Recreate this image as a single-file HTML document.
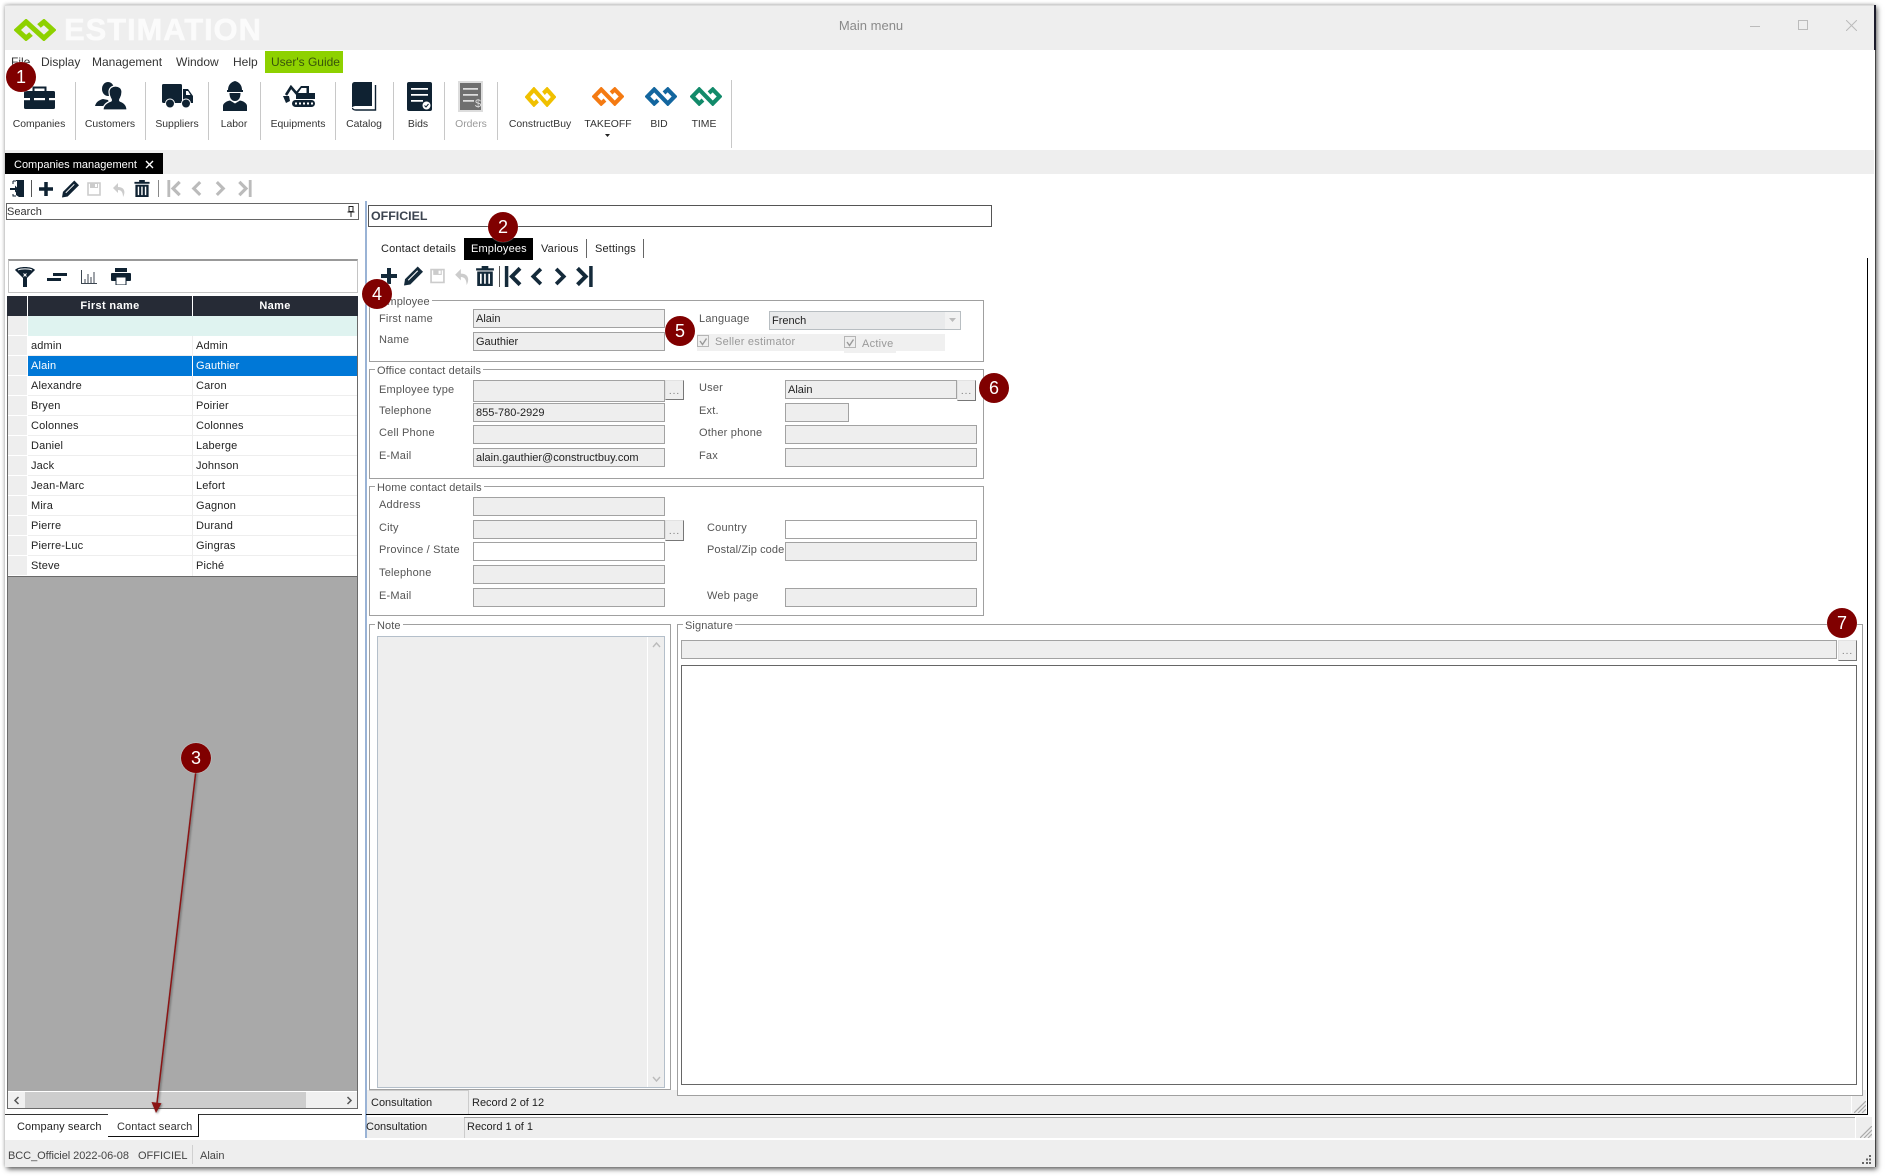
<!DOCTYPE html>
<html lang="en"><head><meta charset="utf-8"><title>Main menu</title>
<style>
html,body{margin:0;padding:0;background:#fff}
body{position:relative;width:1885px;height:1176px;overflow:hidden;font:11px/14px "Liberation Sans",sans-serif;color:#222}
div,span,svg{position:absolute;box-sizing:border-box}
span{white-space:nowrap;margin-top:1px}
.l{color:#555;letter-spacing:.2px}
.i{border:1px solid #a2a2a2;background:#eee;padding-left:2px;line-height:19px;color:#222;height:19px;white-space:nowrap}
.w{background:#fff}
.b{width:19px;height:21px;background:#eee;border:1px solid #e2e2e2;border-right:1px solid #777;border-bottom:1px solid #777;color:#777;text-align:center;line-height:21px;letter-spacing:1px;font-size:10px}
.gb{border:1px solid #a0a0a0;background:#fff}
.lg{background:#fff;padding:0 2px;color:#555;letter-spacing:.1px;height:14px}
.s{width:1px;background:#c8c8c8;top:82px;height:58px}
.tb{font-size:10.4px;color:#333;text-align:center;width:90px;top:117px}
.c{width:30px;height:30px;border-radius:50%;background:#800000;color:#fff;font-size:18px;line-height:30px;text-align:center;z-index:9;box-shadow:0 0 1px #fff}
.r{left:31px;letter-spacing:.15px;color:#222}
.n{left:196px;letter-spacing:.15px;color:#222}
.hl{left:28px;width:329px;height:1px;background:#eee}
.rh{left:8px;width:19px;height:19px;background:#eee}
</style></head><body>
<svg width="0" height="0" style="position:absolute">
<defs>
<symbol id="logo" viewBox="-1.2 -1.2 42.4 24.4" preserveAspectRatio="none"><path d="M16 15.5L11 20 2 11l9-9 18 18 9-9-9-9-5 4.5" fill="none" stroke="currentColor" stroke-width="5.4"/></symbol>
<symbol id="plus" viewBox="0 0 16 16"><path fill="currentColor" d="M6 0h4v6h6v4h-6v6H6v-6H0V6h6z"/></symbol>
<symbol id="pencil" viewBox="0 0 18 18"><path fill="currentColor" d="M13 0l5 5L6 17l-6 1 1-6z"/><path stroke="#fff" stroke-width="1" d="M4 13L13 4"/></symbol>
<symbol id="save" viewBox="0 0 14 14"><path fill="none" stroke="currentColor" stroke-width="1.6" d="M1 1h12v12H1z"/><path fill="currentColor" d="M3 1h8v5H3z"/><path fill="#fff" d="M8 2h2v3H8z"/></symbol>
<symbol id="undo" viewBox="0 0 12 14"><path fill="currentColor" d="M5 0L0 5l5 5V7c3 0 5 2 5 7 2-3 3-10-5-10z"/></symbol>
<symbol id="trash" viewBox="0 0 16 18"><path fill="currentColor" d="M5 0h6v2h5v2H0V2h5zM1 5h14v13H1z"/><path fill="#fff" d="M3.500 7h1.500v9H3.500zM7.200 7h1.500v9H7.200zM11 7h1.500v9H11z"/></symbol>
<symbol id="first" viewBox="0 0 14 18"><path fill="currentColor" d="M0 0h3v18H0z"/><path fill="none" stroke="currentColor" stroke-width="3.400" d="M13 2L6 9l7 7"/></symbol>
<symbol id="prev" viewBox="0 0 12 18"><path fill="none" stroke="currentColor" stroke-width="3.400" d="M10 2L3 9l7 7"/></symbol>
<symbol id="next" viewBox="0 0 12 18"><path fill="none" stroke="currentColor" stroke-width="3.400" d="M2 2l7 7-7 7"/></symbol>
<symbol id="last" viewBox="0 0 14 18"><path fill="currentColor" d="M11 0h3v18h-3z"/><path fill="none" stroke="currentColor" stroke-width="3.400" d="M1 2l7 7-7 7"/></symbol>
<symbol id="grip" viewBox="0 0 12 12"><path stroke="#aaa" stroke-width="1.200" d="M12 0L0 12M12 4L4 12M12 8L8 12"/></symbol>
</defs></svg>

<!-- window -->
<div style="left:5px;top:5px;width:1870px;height:1162px;background:#fff;box-shadow:2px 2px 5px #555,-1px -1px 3px #ddd"></div>
<div style="left:1874px;top:5px;width:2px;height:45px;background:#1c1c2c"></div>
<div style="left:1875px;top:50px;width:1px;height:1117px;background:#444"></div>
<div style="left:5px;top:5px;width:1869px;height:45px;background:#eee;border-top:1px solid #ddd"></div>

<svg style="left:14px;top:19px;color:#8ed100" width="42" height="22"><use href="#logo"/></svg>
<span style="left:64px;top:14px;font:bold 31px/30px 'Liberation Sans',sans-serif;color:#fbfbfb;letter-spacing:.9px;-webkit-text-stroke:.5px #fbfbfb">ESTIMATION</span>
<span style="left:771px;top:18px;width:200px;text-align:center;font-size:13px;color:#8a8a8a">Main menu</span>
<div style="left:1750px;top:26px;width:10px;height:1px;background:#bbb"></div>
<div style="left:1798px;top:20px;width:10px;height:10px;border:1px solid #bbb"></div>
<svg style="left:1846px;top:20px" width="11" height="11"><path d="M0 0l11 11M11 0L0 11" stroke="#bbb"/></svg>

<!-- menu -->
<div style="left:265px;top:51px;width:78px;height:22px;background:#8ed100"></div>
<span style="left:11px;top:54px;font-size:12px;color:#333">File</span>
<span style="left:41px;top:54px;font-size:12px;color:#333">Display</span>
<span style="left:92px;top:54px;font-size:12px;color:#333">Management</span>
<span style="left:176px;top:54px;font-size:12px;color:#333">Window</span>
<span style="left:233px;top:54px;font-size:12px;color:#333">Help</span>
<span style="left:271px;top:54px;font-size:12px;color:#38540a">User's Guide</span>

<!-- main toolbar -->
<div class="s" style="left:75px"></div><div class="s" style="left:145px"></div><div class="s" style="left:208px"></div><div class="s" style="left:260px"></div><div class="s" style="left:335px"></div><div class="s" style="left:393px"></div><div class="s" style="left:444px"></div><div class="s" style="left:497px"></div><div class="s" style="left:731px;top:80px;height:68px"></div>

<svg style="left:24px;top:86px;color:#0f2232" width="31" height="23" viewBox="0 0 31 23"><path d="M9.500 5V1.500h12V5" fill="none" stroke="currentColor" stroke-width="2"/><rect y="5" width="31" height="18" rx="1.500" fill="currentColor"/><rect y="12" width="31" height="2.200" fill="#fff"/><rect x="6" y="10" width="4" height="6" fill="currentColor"/><rect x="21" y="10" width="4" height="6" fill="currentColor"/></svg>
<svg style="left:95px;top:82px;color:#0f2232" width="32" height="28" viewBox="0 0 32 28"><ellipse cx="13" cy="7" rx="6" ry="7" fill="currentColor"/><path d="M0 24c1-4 4-6 8-7l5 1 3 6z" fill="currentColor"/><path d="M8 28c0-6 5-8 8-9 1-1 0-2-.5-3-1-2-1.500-4-1.500-6 0-4 3-6 6.500-6S27 6 27 10c0 2-.5 4-1.500 6-.5 1-1.500 2-.5 3 3 1 7 3 7 9z" fill="currentColor" stroke="#fff" stroke-width="1.200"/></svg>
<svg style="left:162px;top:84px;color:#0f2232" width="31" height="24" viewBox="0 0 31 24"><rect width="20" height="19" rx="1.500" fill="currentColor"/><path d="M21 5h5l5 7v7H21z" fill="currentColor"/><path d="M24 7h2l2.500 4H24z" fill="#fff"/><circle cx="8" cy="19.500" r="4.500" fill="currentColor" stroke="#fff"/><circle cx="24" cy="19.500" r="4.500" fill="currentColor" stroke="#fff"/></svg>
<svg style="left:223px;top:81px;color:#0f2232" width="24" height="30" viewBox="0 0 24 30"><path d="M5 9c0-5 3-8 7-9 4 1 7 4 7 9z" fill="currentColor"/><rect x="4" y="9" width="16" height="2" fill="currentColor"/><path d="M6.500 12h11c0 5-2 8-5.500 8s-5.500-3-5.500-8z" fill="currentColor"/><path d="M0 30v-5c0-3 4-5 7-5.500l5 3 5-3c3 .5 7 2.500 7 5.500v5z" fill="currentColor"/></svg>
<svg style="left:283px;top:85px;color:#0f2232" width="32" height="22" viewBox="0 0 32 22"><rect x="9" y="15" width="23" height="7" rx="3.500" fill="currentColor"/><path fill="#fff" d="M12 17.500h2v2h-2zM16 17.500h2v2h-2zM20 17.500h2v2h-2zM24 17.500h2v2h-2zM28 17.500h2v2h-2z"/><path d="M13 14V7l5-6h8v7h6v6z" fill="currentColor"/><path d="M18.500 3h5v5H15z" fill="#fff"/><path d="M14 9L8 2 3 10" fill="none" stroke="currentColor" stroke-width="2.600"/><path d="M0 11h6l1 5-4 2z" fill="currentColor"/></svg>
<svg style="left:352px;top:82px;color:#0f2232" width="25" height="29" viewBox="0 0 25 29"><path d="M0 3c0-2 1-3 3-3h17v24H4c-2 0-4 .8-4 2z" fill="currentColor"/><path d="M23.500 3v25H4c-2 0-3.500-.8-3.500-2" fill="none" stroke="currentColor" stroke-width="1.400"/></svg>
<svg style="left:407px;top:82px;color:#0f2232" width="25" height="29" viewBox="0 0 25 29"><rect width="25" height="29" rx="2" fill="currentColor"/><path fill="#fff" d="M4 6h17v1.800H4zM4 12h17v1.800H4zM4 18h12v1.800H4z"/><circle cx="19.500" cy="23.500" r="4" fill="#fff"/><path d="M17.500 23.500l1.500 1.500 2.500-3" fill="none" stroke="#0f2232" stroke-width="1"/></svg>
<div style="left:458px;top:81px;width:25px;height:31px;background:#6f6f6f;border:2px solid #ddd"></div>
<svg style="left:458px;top:81px" width="25" height="31" viewBox="0 0 25 31"><path fill="#ddd" d="M5 7h15v1.800H5zM5 13h15v1.800H5zM5 19h11v1.800H5z"/></svg>
<span style="left:475px;top:96px;font-size:11px;color:#ddd">$</span>

<svg style="left:525px;top:87px;color:#f0c000" width="31" height="20"><use href="#logo"/></svg>
<svg style="left:592px;top:87px;color:#f47a12" width="32" height="19"><use href="#logo"/></svg>
<svg style="left:645px;top:87px;color:#13669f" width="32" height="19"><use href="#logo"/></svg>
<svg style="left:690px;top:87px;color:#128a6a" width="32" height="19"><use href="#logo"/></svg>
<svg style="left:605px;top:134px" width="5" height="3"><path d="M0 0h5L2.500 3z" fill="#222"/></svg>

<span class="tb" style="left:-6px">Companies</span>
<span class="tb" style="left:65px">Customers</span>
<span class="tb" style="left:132px">Suppliers</span>
<span class="tb" style="left:189px">Labor</span>
<span class="tb" style="left:253px">Equipments</span>
<span class="tb" style="left:319px">Catalog</span>
<span class="tb" style="left:373px">Bids</span>
<span class="tb" style="left:426px;color:#9a9a9a">Orders</span>
<span class="tb" style="left:495px">ConstructBuy</span>
<span class="tb" style="left:563px">TAKEOFF</span>
<span class="tb" style="left:614px">BID</span>
<span class="tb" style="left:659px">TIME</span>

<!-- doc tab band -->
<div style="left:5px;top:150px;width:1869px;height:24px;background:#eee"></div>
<div style="left:5px;top:153px;width:158px;height:21px;background:#000"></div>
<span style="left:14px;top:157px;color:#fff;font-size:11px">Companies management</span>
<svg style="left:145px;top:160px" width="9" height="9"><path d="M1 1l7 7M8 1L1 8" stroke="#fff" stroke-width="1.400"/></svg>

<!-- toolbar 2 -->
<svg style="left:10px;top:180px;color:#0f2232" width="14" height="17" viewBox="0 0 14 17"><path d="M6 0h8v17H9l-3-2v-4h1V1H6z" fill="currentColor"/><path d="M0 8h5V5.500L8.500 9 5 12.500V10H0z" fill="currentColor"/><path d="M3 1h3M3 1v3M3 14v2h3" stroke="currentColor" fill="none"/></svg>
<div style="left:31px;top:180px;width:1px;height:17px;background:#555"></div>
<svg style="left:39px;top:182px;color:#0f2232" width="14" height="14"><use href="#plus"/></svg>
<svg style="left:62px;top:180px;color:#0f2232" width="17" height="18"><use href="#pencil"/></svg>
<svg style="left:87px;top:182px;color:#ccc" width="14" height="14"><use href="#save"/></svg>
<svg style="left:113px;top:183px;color:#ccc" width="12" height="14"><use href="#undo"/></svg>
<svg style="left:134px;top:180px;color:#0f2232" width="16" height="17"><use href="#trash"/></svg>
<div style="left:158px;top:180px;width:1px;height:17px;background:#888"></div>
<svg style="left:167px;top:180px;color:#bbb" width="14" height="17"><use href="#first"/></svg>
<svg style="left:191px;top:180px;color:#bbb" width="11" height="17"><use href="#prev"/></svg>
<svg style="left:215px;top:180px;color:#bbb" width="11" height="17"><use href="#next"/></svg>
<svg style="left:238px;top:180px;color:#bbb" width="14" height="17"><use href="#last"/></svg>

<!-- search -->
<div style="left:6px;top:203px;width:353px;height:17px;border:1px solid #666"></div>
<span style="left:7px;top:204px;color:#333">Search</span>
<svg style="left:347px;top:206px" width="8" height="11" viewBox="0 0 8 11"><path d="M2 .5h4v5H2zM.5 6h7M4 6v5" fill="none" stroke="#222"/></svg>

<div style="left:365px;top:201px;width:2px;height:937px;background:#9ab3d5"></div>

<!-- grid toolbar -->
<div style="left:8px;top:259px;width:350px;height:34px;border:1px solid #c4c4c4;border-top:2px solid #999;background:#fff"></div>
<svg style="left:15px;top:267px;color:#0f2232" width="20" height="20" viewBox="0 0 20 20"><path d="M0 3c3-4 17-4 20 0l-8 8v9H8v-9z" fill="currentColor"/><path d="M3 3c3-1.500 11-1.500 14 0" stroke="#fff" fill="none"/><path d="M8.500 6.500l3 3M11.500 6.500l-3 3" stroke="#fff"/></svg>
<svg style="left:47px;top:273px;color:#0f2232" width="20" height="8"><path d="M6 0h14v3H6zM0 5h14v3H0z" fill="currentColor"/></svg>
<svg style="left:81px;top:270px" width="16" height="14"><path d="M.5 0v13.500H16M4 13V9M7 13V4M10 13V7M13 13V2" stroke="#3c4650" fill="none"/></svg>
<svg style="left:111px;top:268px;color:#0f2232" width="20" height="17" viewBox="0 0 20 17"><rect x="4" width="12" height="4" fill="currentColor"/><rect y="5" width="20" height="8" rx="1" fill="currentColor"/><rect x="5" y="9" width="10" height="8" fill="#fff" stroke="#0f2232"/></svg>

<!-- grid -->
<div style="left:7px;top:296px;width:351px;height:813px;border:1px solid #6a6a6a;border-top:0;background:#a9a9a9"></div>
<div style="left:7px;top:296px;width:351px;height:20px;background:#262b36"></div>
<div style="left:27px;top:296px;width:1px;height:20px;background:#fff"></div>
<div style="left:192px;top:296px;width:1px;height:20px;background:#fff"></div>
<span style="left:28px;top:298px;width:164px;text-align:center;color:#fff;font-weight:bold;font-size:11px;letter-spacing:.35px">First name</span>
<span style="left:193px;top:298px;width:164px;text-align:center;color:#fff;font-weight:bold;font-size:11px;letter-spacing:.35px">Name</span>
<div style="left:8px;top:316px;width:349px;height:260px;background:#fff"></div>
<div style="left:28px;top:316px;width:329px;height:20px;background:#dff3f0"></div>
<div style="left:192px;top:336px;width:1px;height:240px;background:#eee"></div>
<div style="left:28px;top:356px;width:329px;height:20px;background:#0078d7"></div>
<div style="left:192px;top:356px;width:1px;height:20px;background:#fff"></div>
<div style="left:8px;top:576px;width:349px;height:1px;background:#6a6a6a"></div>
<div class="rh" style="top:316px"></div><div class="rh" style="top:336px"></div><div class="rh" style="top:356px"></div><div class="rh" style="top:376px"></div><div class="rh" style="top:396px"></div><div class="rh" style="top:416px"></div><div class="rh" style="top:436px"></div><div class="rh" style="top:456px"></div><div class="rh" style="top:476px"></div><div class="rh" style="top:496px"></div><div class="rh" style="top:516px"></div><div class="rh" style="top:536px"></div><div class="rh" style="top:556px"></div>
<div class="hl" style="top:355px"></div><div class="hl" style="top:395px"></div><div class="hl" style="top:415px"></div><div class="hl" style="top:435px"></div><div class="hl" style="top:455px"></div><div class="hl" style="top:475px"></div><div class="hl" style="top:495px"></div><div class="hl" style="top:515px"></div><div class="hl" style="top:535px"></div><div class="hl" style="top:555px"></div>
<span class="r" style="top:338px">admin</span><span class="n" style="top:338px">Admin</span>
<span class="r" style="top:358px;color:#fff">Alain</span><span class="n" style="top:358px;color:#fff">Gauthier</span>
<span class="r" style="top:378px">Alexandre</span><span class="n" style="top:378px">Caron</span>
<span class="r" style="top:398px">Bryen</span><span class="n" style="top:398px">Poirier</span>
<span class="r" style="top:418px">Colonnes</span><span class="n" style="top:418px">Colonnes</span>
<span class="r" style="top:438px">Daniel</span><span class="n" style="top:438px">Laberge</span>
<span class="r" style="top:458px">Jack</span><span class="n" style="top:458px">Johnson</span>
<span class="r" style="top:478px">Jean-Marc</span><span class="n" style="top:478px">Lefort</span>
<span class="r" style="top:498px">Mira</span><span class="n" style="top:498px">Gagnon</span>
<span class="r" style="top:518px">Pierre</span><span class="n" style="top:518px">Durand</span>
<span class="r" style="top:538px">Pierre-Luc</span><span class="n" style="top:538px">Gingras</span>
<span class="r" style="top:558px">Steve</span><span class="n" style="top:558px">Piché</span>
<!-- hscroll -->
<div style="left:8px;top:1091px;width:349px;height:17px;background:#f0f0f0;border-top:1px solid #fff"></div>
<div style="left:25px;top:1092px;width:281px;height:16px;background:#cdcdcd"></div>
<svg style="left:13px;top:1096px" width="7" height="9"><path d="M5.500 1L2 4.500 5.500 8" fill="none" stroke="#555" stroke-width="1.500"/></svg>
<svg style="left:346px;top:1096px" width="7" height="9"><path d="M1.500 1L5 4.500 1.500 8" fill="none" stroke="#555" stroke-width="1.500"/></svg>
<!-- bottom tabs -->
<div style="left:5px;top:1114px;width:103px;height:1px;background:#333"></div>
<div style="left:198px;top:1114px;width:164px;height:1px;background:#333"></div>
<div style="left:108px;top:1136px;width:90px;height:1px;background:#111"></div>
<div style="left:198px;top:1114px;width:1px;height:23px;background:#111"></div>
<span style="left:17px;top:1119px;color:#222;letter-spacing:.1px">Company search</span>
<span style="left:117px;top:1119px;color:#333;letter-spacing:.1px">Contact search</span>

<!-- right header -->
<div style="left:368px;top:205px;width:624px;height:22px;border:1px solid #555"></div>
<span style="left:371px;top:208px;font-weight:bold;font-size:12.400px;color:#3c4450">OFFICIEL</span>
<div style="left:464px;top:238px;width:69px;height:22px;background:#000"></div>
<span style="left:381px;top:241px;color:#222;letter-spacing:.15px">Contact details</span>
<span style="left:471px;top:241px;color:#fff;letter-spacing:.15px">Employees</span>
<span style="left:541px;top:241px;color:#222;letter-spacing:.15px">Various</span>
<span style="left:595px;top:241px;color:#222;letter-spacing:.15px">Settings</span>
<div style="left:586px;top:239px;width:1px;height:19px;background:#666"></div>
<div style="left:643px;top:239px;width:1px;height:19px;background:#666"></div>

<svg style="left:381px;top:268px;color:#142a3a" width="16" height="16"><use href="#plus"/></svg>
<svg style="left:404px;top:266px;color:#142a3a" width="19" height="20"><use href="#pencil"/></svg>
<svg style="left:430px;top:268px;color:#ccc" width="15" height="16"><use href="#save"/></svg>
<svg style="left:455px;top:269px;color:#ccc" width="14" height="16"><use href="#undo"/></svg>
<svg style="left:476px;top:266px;color:#142a3a" width="18" height="20"><use href="#trash"/></svg>
<div style="left:499px;top:266px;width:1px;height:21px;background:#555"></div>
<svg style="left:504px;top:266px;color:#142a3a" width="18" height="21"><use href="#first"/></svg>
<svg style="left:530px;top:266px;color:#142a3a" width="13" height="21"><use href="#prev"/></svg>
<svg style="left:554px;top:266px;color:#142a3a" width="13" height="21"><use href="#next"/></svg>
<svg style="left:575px;top:266px;color:#142a3a" width="19" height="21"><use href="#last"/></svg>

<div style="left:1867px;top:258px;width:1px;height:857px;background:#000"></div>

<!-- Employee -->
<div class="gb" style="left:369px;top:300px;width:615px;height:62px"></div>
<span class="lg" style="left:378px;top:294px">Employee</span>
<span class="l" style="left:379px;top:311px">First name</span>
<span class="l" style="left:379px;top:332px">Name</span>
<div class="i" style="left:473px;top:309px;width:192px">Alain</div>
<div class="i" style="left:473px;top:332px;width:192px">Gauthier</div>
<span class="l" style="left:699px;top:311px">Language</span>
<div class="i" style="left:769px;top:311px;width:192px;background:#e9eaeb;border-color:#b8bec2">French</div>
<div style="left:945px;top:312px;width:15px;height:17px;background:#f2f2f2"></div>
<svg style="left:949px;top:318px" width="7" height="4"><path d="M0 0h7L3.500 4z" fill="#bbb"/></svg>
<div style="left:697px;top:334px;width:248px;height:17px;background:#f0f0f0"></div>
<div style="left:844px;top:351px;width:52px;height:2px;background:#f0f0f0"></div>
<div style="left:697px;top:335px;width:12px;height:12px;border:1px solid #b5b5b5;background:#eee"></div>
<svg style="left:698px;top:336px" width="11" height="11"><path d="M2 5l2.500 3.500 4-6" stroke="#999" stroke-width="1.400" fill="none"/></svg>
<span style="left:715px;top:334px;color:#999;letter-spacing:.25px">Seller estimator</span>
<div style="left:844px;top:336px;width:12px;height:12px;border:1px solid #b5b5b5;background:#eee"></div>
<svg style="left:845px;top:337px" width="11" height="11"><path d="M2 5l2.500 3.500 4-6" stroke="#999" stroke-width="1.400" fill="none"/></svg>
<span style="left:862px;top:336px;color:#999;letter-spacing:.25px">Active</span>

<!-- Office -->
<div class="gb" style="left:369px;top:369px;width:615px;height:110px"></div>
<span class="lg" style="left:375px;top:363px">Office contact details</span>
<span class="l" style="left:379px;top:382px">Employee type</span>
<span class="l" style="left:379px;top:403px">Telephone</span>
<span class="l" style="left:379px;top:425px">Cell Phone</span>
<span class="l" style="left:379px;top:448px">E-Mail</span>
<div class="i" style="left:473px;top:380px;width:192px;height:22px"></div>
<div class="b" style="left:665px;top:380px;height:20px;line-height:22px">...</div>
<div class="i" style="left:473px;top:403px;width:192px">855-780-2929</div>
<div class="i" style="left:473px;top:425px;width:192px"></div>
<div class="i" style="left:473px;top:448px;width:192px">alain.gauthier@constructbuy.com</div>
<span class="l" style="left:699px;top:380px">User</span>
<span class="l" style="left:699px;top:403px">Ext.</span>
<span class="l" style="left:699px;top:425px">Other phone</span>
<span class="l" style="left:699px;top:448px">Fax</span>
<div class="i" style="left:785px;top:380px;width:172px">Alain</div>
<div class="b" style="left:957px;top:380px">...</div>
<div class="i" style="left:785px;top:403px;width:64px"></div>
<div class="i" style="left:785px;top:425px;width:192px"></div>
<div class="i" style="left:785px;top:448px;width:192px"></div>

<!-- Home -->
<div class="gb" style="left:369px;top:486px;width:615px;height:130px"></div>
<span class="lg" style="left:375px;top:480px">Home contact details</span>
<span class="l" style="left:379px;top:497px">Address</span>
<span class="l" style="left:379px;top:520px">City</span>
<span class="l" style="left:379px;top:542px">Province / State</span>
<span class="l" style="left:379px;top:565px">Telephone</span>
<span class="l" style="left:379px;top:588px">E-Mail</span>
<div class="i" style="left:473px;top:497px;width:192px"></div>
<div class="i" style="left:473px;top:520px;width:192px"></div>
<div class="b" style="left:665px;top:520px">...</div>
<div class="i w" style="left:473px;top:542px;width:192px"></div>
<div class="i" style="left:473px;top:565px;width:192px"></div>
<div class="i" style="left:473px;top:588px;width:192px"></div>
<span class="l" style="left:707px;top:520px">Country</span>
<span class="l" style="left:707px;top:542px;letter-spacing:.1px">Postal/Zip code</span>
<span class="l" style="left:707px;top:588px">Web page</span>
<div class="i w" style="left:785px;top:520px;width:192px"></div>
<div class="i" style="left:785px;top:542px;width:192px"></div>
<div class="i" style="left:785px;top:588px;width:192px"></div>

<!-- Status 1 -->
<div style="left:367px;top:1090px;width:1499px;height:24px;background:#eee"></div>
<div style="left:468px;top:1090px;width:1px;height:24px;background:#ccc"></div>
<div style="left:369px;top:1090px;width:99px;height:1px;background:#ccc"></div>
<span style="left:371px;top:1095px;color:#222">Consultation</span>
<span style="left:472px;top:1095px;color:#222">Record 2 of 12</span>
<svg style="left:1854px;top:1101px" width="12" height="12"><use href="#grip"/></svg>
<div style="left:1851px;top:1096px;width:1px;height:17px;background:#fff"></div>
<div style="left:366px;top:1114px;width:1502px;height:1px;background:#000"></div>

<!-- Note -->
<div class="gb" style="left:369px;top:624px;width:302px;height:466px"></div>
<span class="lg" style="left:375px;top:618px">Note</span>
<div style="left:377px;top:636px;width:288px;height:452px;background:#eee;border:1px solid #b4bfca"></div>
<div style="left:647px;top:637px;width:17px;height:450px;background:#eee;border-left:1px solid #fff"></div>
<svg style="left:652px;top:642px" width="9" height="6"><path d="M1 5l3.500-4L8 5" fill="none" stroke="#bbb" stroke-width="1.400"/></svg>
<svg style="left:652px;top:1076px" width="9" height="6"><path d="M1 1l3.500 4L8 1" fill="none" stroke="#bbb" stroke-width="1.400"/></svg>

<!-- Signature -->
<div class="gb" style="left:677px;top:624px;width:1186px;height:472px"></div>
<span class="lg" style="left:683px;top:618px">Signature</span>
<div class="i" style="left:681px;top:640px;width:1156px"></div>
<div class="b" style="left:1838px;top:640px">...</div>
<div style="left:681px;top:665px;width:1176px;height:420px;border:1px solid #666;background:#fff"></div>

<!-- Status 2 -->
<div style="left:367px;top:1117px;width:1505px;height:21px;background:#eee"></div>
<div style="left:464px;top:1117px;width:1px;height:21px;background:#ccc"></div>
<div style="left:464px;top:1117px;width:1391px;height:1px;background:#a0a0a0"></div>
<div style="left:1855px;top:1117px;width:1px;height:21px;background:#fff"></div>
<span style="left:366px;top:1119px;color:#222">Consultation</span>
<span style="left:467px;top:1119px;color:#222">Record 1 of 1</span>
<svg style="left:1860px;top:1126px" width="12" height="12"><use href="#grip"/></svg>

<!-- Footer -->
<div style="left:5px;top:1140px;width:1870px;height:27px;background:#eee"></div>
<span style="left:8px;top:1148px;color:#444;letter-spacing:-.05px">BCC_Officiel 2022-06-08</span>
<span style="left:138px;top:1148px;color:#444">OFFICIEL</span>
<div style="left:192px;top:1145px;width:1px;height:19px;background:#d0d0d0"></div>
<span style="left:200px;top:1148px;color:#444">Alain</span>
<svg style="left:1862px;top:1155px" width="10" height="10"><path fill="#666" d="M7 0h2v2H7zM4 3.500h2v2H4zM7 3.500h2v2H7zM0 7h2v2H0zM4 7h2v2H4zM7 7h2v2H7z"/></svg>

<!-- annotations -->
<svg style="left:0;top:0;z-index:8;filter:drop-shadow(1px 1px 1px rgba(0,0,0,.45))" width="1885" height="1176"><path d="M196 770L157 1103" stroke="#8a1414" stroke-width="1.500" fill="none"/><path d="M151.500 1102l10 1.200L156 1113z" fill="#8a1414"/></svg>
<div class="c" style="left:6px;top:62px">1</div>
<div class="c" style="left:488px;top:212px">2</div>
<div class="c" style="left:181px;top:743px">3</div>
<div class="c" style="left:362px;top:279px">4</div>
<div class="c" style="left:665px;top:316px">5</div>
<div class="c" style="left:979px;top:373px">6</div>
<div class="c" style="left:1827px;top:608px">7</div>
</body></html>
